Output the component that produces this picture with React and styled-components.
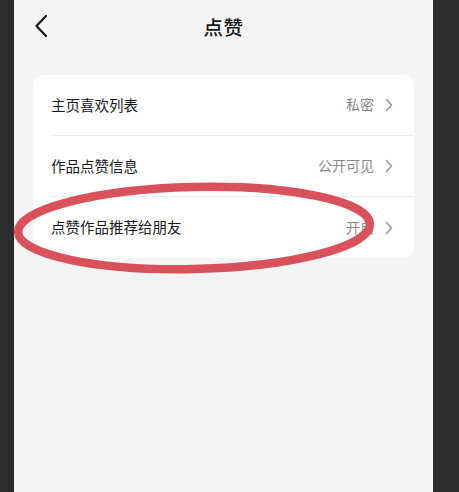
import React from "react";
import styled, { createGlobalStyle } from "styled-components";

const GlobalStyle = createGlobalStyle`
  html, body {
    margin: 0;
    padding: 0;
    background: #2b2b2b;
  }
  body {
    font-family: "Noto Sans CJK SC", "Noto Sans", sans-serif;
  }
`;

const rows = [
  { label: "主页喜欢列表", value: "私密" },
  { label: "作品点赞信息", value: "公开可见" },
  { label: "点赞作品推荐给朋友", value: "开启" },
];

export default function App() {
  return (
    <>
      <GlobalStyle />
      <Frame>
        <Phone>
          <Header>
            <BackButton aria-label="back">
              <svg width="14" height="24" viewBox="0 0 14 24" fill="none">
                <path
                  d="M12 2 L2.5 12 L12 22"
                  stroke="#161616"
                  strokeWidth="2.2"
                  strokeLinecap="round"
                  strokeLinejoin="round"
                />
              </svg>
            </BackButton>
            <Title>点赞</Title>
          </Header>

          <Card>
            {rows.map((row, i) => (
              <Row key={row.label} $last={i === rows.length - 1}>
                <Label>{row.label}</Label>
                <Value>{row.value}</Value>
                <Chevron width="8" height="14" viewBox="0 0 8 14" fill="none">
                  <path
                    d="M1.5 1.5 L6.5 7 L1.5 12.5"
                    stroke="#9a9a9a"
                    strokeWidth="1.6"
                    strokeLinecap="round"
                    strokeLinejoin="round"
                  />
                </Chevron>
              </Row>
            ))}
          </Card>

          <Mark width="364" height="96" viewBox="0 0 364 96">
            <ellipse
              cx="181"
              cy="47"
              rx="176"
              ry="41"
              fill="none"
              stroke="#d9525b"
              strokeWidth="8.5"
              transform="rotate(-1.3 181 47)"
            />
          </Mark>
        </Phone>
      </Frame>
    </>
  );
}

const Frame = styled.div`
  display: flex;
  height: 492px;
  width: 459px;
  padding-left: 14px;
  box-sizing: border-box;
  background: #2b2b2b;
  overflow: hidden;
`;

const Phone = styled.div`
  position: relative;
  width: 419px;
  height: 100%;
  background: #f4f4f4;
  display: flex;
  flex-direction: column;
`;

const Header = styled.div`
  position: relative;
  height: 52px;
  display: flex;
  align-items: center;
  justify-content: center;
`;

const BackButton = styled.div`
  position: absolute;
  left: 20px;
  top: 14px;
  display: flex;
`;

const Title = styled.div`
  font-size: 19.5px;
  font-weight: 500;
  color: #161616;
  letter-spacing: 0.5px;
`;

const Card = styled.div`
  margin: 23px 19px 0;
  background: #ffffff;
  border-radius: 10px;
  overflow: hidden;
`;

const Row = styled.div`
  height: 61px;
  margin-left: 18px;
  padding-right: 21px;
  display: flex;
  align-items: center;
  box-sizing: border-box;
  border-bottom: ${(p) => (p.$last ? "none" : "1px solid #ececec")};
`;

const Label = styled.div`
  flex: 1;
  font-size: 14.5px;
  color: #181818;
  padding-bottom: 2px;
`;

const Value = styled.div`
  font-size: 14px;
  color: #888888;
  padding-bottom: 2px;
`;

const Chevron = styled.svg`
  margin-left: 11px;
  display: block;
`;

const Mark = styled.svg`
  position: absolute;
  left: -1px;
  top: 181px;
`;
